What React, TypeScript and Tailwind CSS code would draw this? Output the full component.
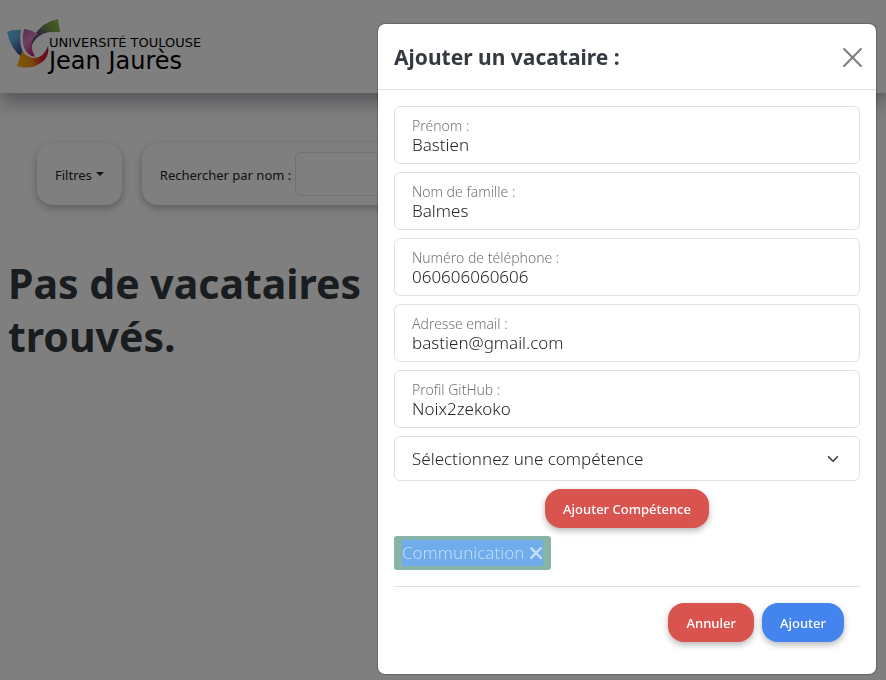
import { useState } from "react";
import type { ReactNode } from "react";

const fields = [
  { id: "prenom", label: "Prénom :", value: "Bastien", type: "text" },
  { id: "nom", label: "Nom de famille :", value: "Balmes", type: "text" },
  { id: "telephone", label: "Numéro de téléphone :", value: "060606060606", type: "tel" },
  { id: "email", label: "Adresse email :", value: "bastien@gmail.com", type: "email" },
  { id: "github", label: "Profil GitHub :", value: "Noix2zekoko", type: "text" },
];

function Logo() {
  return (
    <a href="#" className="flex items-center text-black">
      <svg viewBox="0 0 54 52" className="h-13 w-[54px] shrink-0" aria-hidden="true">
        <defs>
          <linearGradient id="blue" x1="0" y1="0" x2="0.6" y2="1">
            <stop offset="0" stopColor="#58c4f4" />
            <stop offset="0.4" stopColor="#66b4e4" />
            <stop offset="1" stopColor="#303a94" />
          </linearGradient>
          <linearGradient id="pink" x1="0" y1="0" x2="0.5" y2="1">
            <stop offset="0" stopColor="#b05aa4" />
            <stop offset="0.5" stopColor="#d884ba" />
            <stop offset="1" stopColor="#c01a70" />
          </linearGradient>
          <linearGradient id="green" x1="0" y1="1" x2="1" y2="0">
            <stop offset="0" stopColor="#50307c" />
            <stop offset="0.4" stopColor="#5c5474" />
            <stop offset="0.75" stopColor="#80ac40" />
            <stop offset="1" stopColor="#8cc450" />
          </linearGradient>
          <linearGradient id="orange" x1="0" y1="0.5" x2="1" y2="0.3">
            <stop offset="0" stopColor="#ffb000" />
            <stop offset="0.4" stopColor="#f09010" />
            <stop offset="0.75" stopColor="#e02028" />
            <stop offset="1" stopColor="#a82050" />
          </linearGradient>
        </defs>
        <path d="M0 13 Q7 10 14 11 Q11 25 18 38 L15 38 Q4 31 0 13Z" fill="url(#blue)" />
        <path d="M15 32 Q20 39 28 39 Q37 38 41 27 Q43 39 32 45 Q23 51 10 47Z" fill="url(#orange)" />
        <path d="M27 17 Q35 3 51 0 L53 13 Q35 11 27 22 Q24 26 25 31 Q22 24 27 17Z" fill="url(#green)" />
        <path d="M17 10 Q25 11 31 15 Q20 22 28 38 Q12 34 17 10Z" fill="url(#pink)" />
      </svg>
      <span className="-ml-3 flex flex-col pt-5 font-['DejaVu_Sans','Liberation_Sans',sans-serif]">
        <span className="text-[13px] leading-3">UNIVERSITÉ TOULOUSE</span>
        <span className="text-[24px] leading-6">Jean Jaurès</span>
      </span>
    </a>
  );
}

function PillButton({ children, className }: { children: ReactNode; className: string }) {
  return (
    <button
      type="button"
      className={`h-[39px] rounded-2xl px-[18px] pt-[2px] text-[13px] font-medium text-white shadow-[0_3px_6px_rgba(0,0,0,0.28)] ${className}`}
    >
      {children}
    </button>
  );
}

function CloseIcon({ className, width }: { className: string; width: number }) {
  return (
    <svg viewBox="0 0 20 20" className={className} stroke="currentColor" strokeWidth={width} strokeLinecap="round" aria-hidden="true">
      <path d="M2 2 18 18M18 2 2 18" />
    </svg>
  );
}

function Modal() {
  const [values, setValues] = useState<Record<string, string>>(
    Object.fromEntries(fields.map((f) => [f.id, f.value])),
  );
  return (
    <div className="fixed inset-0 flex items-start justify-end bg-black/50 px-[9px] py-[23px]">
      <div
        role="dialog"
        aria-labelledby="modal-title"
        className="w-full max-w-[500px] rounded-lg border border-black/20 bg-white bg-clip-padding"
      >
        <div className="flex items-center justify-between border-b border-[#dee2e6] pb-[15px] pl-4 pr-[10px] pt-[17px]">
          <h2 id="modal-title" className="text-[21px] font-bold leading-[33px] text-[#343a40]">
            Ajouter un vacataire :
          </h2>
          <button type="button" aria-label="Fermer" className="p-[3px] text-[#7f7f7f]">
            <CloseIcon className="size-[21px]" width={2} />
          </button>
        </div>
        <form className="flex flex-col gap-2 p-4">
          {fields.map((f) => (
            <div key={f.id} className="flex h-[58px] flex-col rounded-md border border-[#dee2e6] px-[17px] pt-[10px]">
              <label htmlFor={f.id} className="text-[14px] font-light leading-[18px] text-[#6f7478]">
                {f.label}
              </label>
              <input
                id={f.id}
                type={f.type}
                value={values[f.id]}
                onChange={(e) => setValues({ ...values, [f.id]: e.target.value })}
                className="w-full bg-transparent text-[17px] font-light leading-[20px] text-[#212529] outline-none"
              />
            </div>
          ))}
          <div className="grid">
            <select
              aria-label="Compétence"
              className="col-start-1 row-start-1 h-[45px] appearance-none rounded-md border border-[#dee2e6] bg-white px-[17px] text-[17px] font-light text-[#212529]"
            >
              <option>Sélectionnez une compétence</option>
              <option>Communication</option>
            </select>
            <svg
              viewBox="0 0 16 16"
              fill="none"
              stroke="#343a40"
              strokeWidth="2"
              strokeLinecap="round"
              strokeLinejoin="round"
              className="pointer-events-none col-start-1 row-start-1 mr-[21px] size-3 self-center justify-self-end"
              aria-hidden="true"
            >
              <path d="m2 5 6 6 6-6" />
            </svg>
          </div>
          <PillButton className="self-center bg-[#d9534f]">Ajouter Compétence</PillButton>
          <div className="flex">
            <span className="rounded-[3px] bg-[#87b3a8] px-2 py-1">
              <span className="flex h-[26px] items-center gap-[5px] bg-[#6eacec] text-[17px] font-light text-[#c4def8]">
                Communication
                <button type="button" aria-label="Retirer Communication" className="px-px">
                  <CloseIcon className="size-3" width={4} />
                </button>
              </span>
            </span>
          </div>
          <div className="mt-2 flex justify-end gap-2 border-t border-[#dee2e6] p-4">
            <PillButton className="bg-[#d9534f]">Annuler</PillButton>
            <PillButton className="bg-[#4484ee]">Ajouter</PillButton>
          </div>
        </form>
      </div>
    </div>
  );
}

export default function App() {
  return (
    <div className="min-h-screen bg-white font-['Noto_Sans','Open_Sans',sans-serif] text-[#212529]">
      <header className="flex h-[93px] items-center px-[7px] pb-1 shadow-[0_8px_20px_rgba(20,20,50,0.4)]">
        <Logo />
      </header>
      <main>
        <div className="flex gap-5 px-[37px] pt-[50px]">
          <button
            type="button"
            className="flex h-[62px] items-center gap-1 rounded-2xl px-[18px] text-[13px] shadow-[0_3px_8px_rgba(0,0,0,0.28)]"
          >
            <span className="pt-[3px]">Filtres</span>
            <span className="border-x-4 border-t-4 border-x-transparent border-t-[#212529]" />
          </button>
          <div className="flex h-[62px] items-center gap-1 rounded-2xl px-[18px] text-[13px] shadow-[0_3px_8px_rgba(0,0,0,0.28)]">
            <label htmlFor="recherche" className="whitespace-nowrap pt-[3px]">
              Rechercher par nom :
            </label>
            <input id="recherche" type="text" className="h-11 w-52 rounded-md border border-[#dee2e6] px-3" />
          </div>
        </div>
        <h1 className="w-1/2 px-2 pt-[52px] text-[41px] font-bold leading-[53px] text-[#343a40]">Pas de vacataires trouvés.</h1>
      </main>
      <Modal />
    </div>
  );
}
